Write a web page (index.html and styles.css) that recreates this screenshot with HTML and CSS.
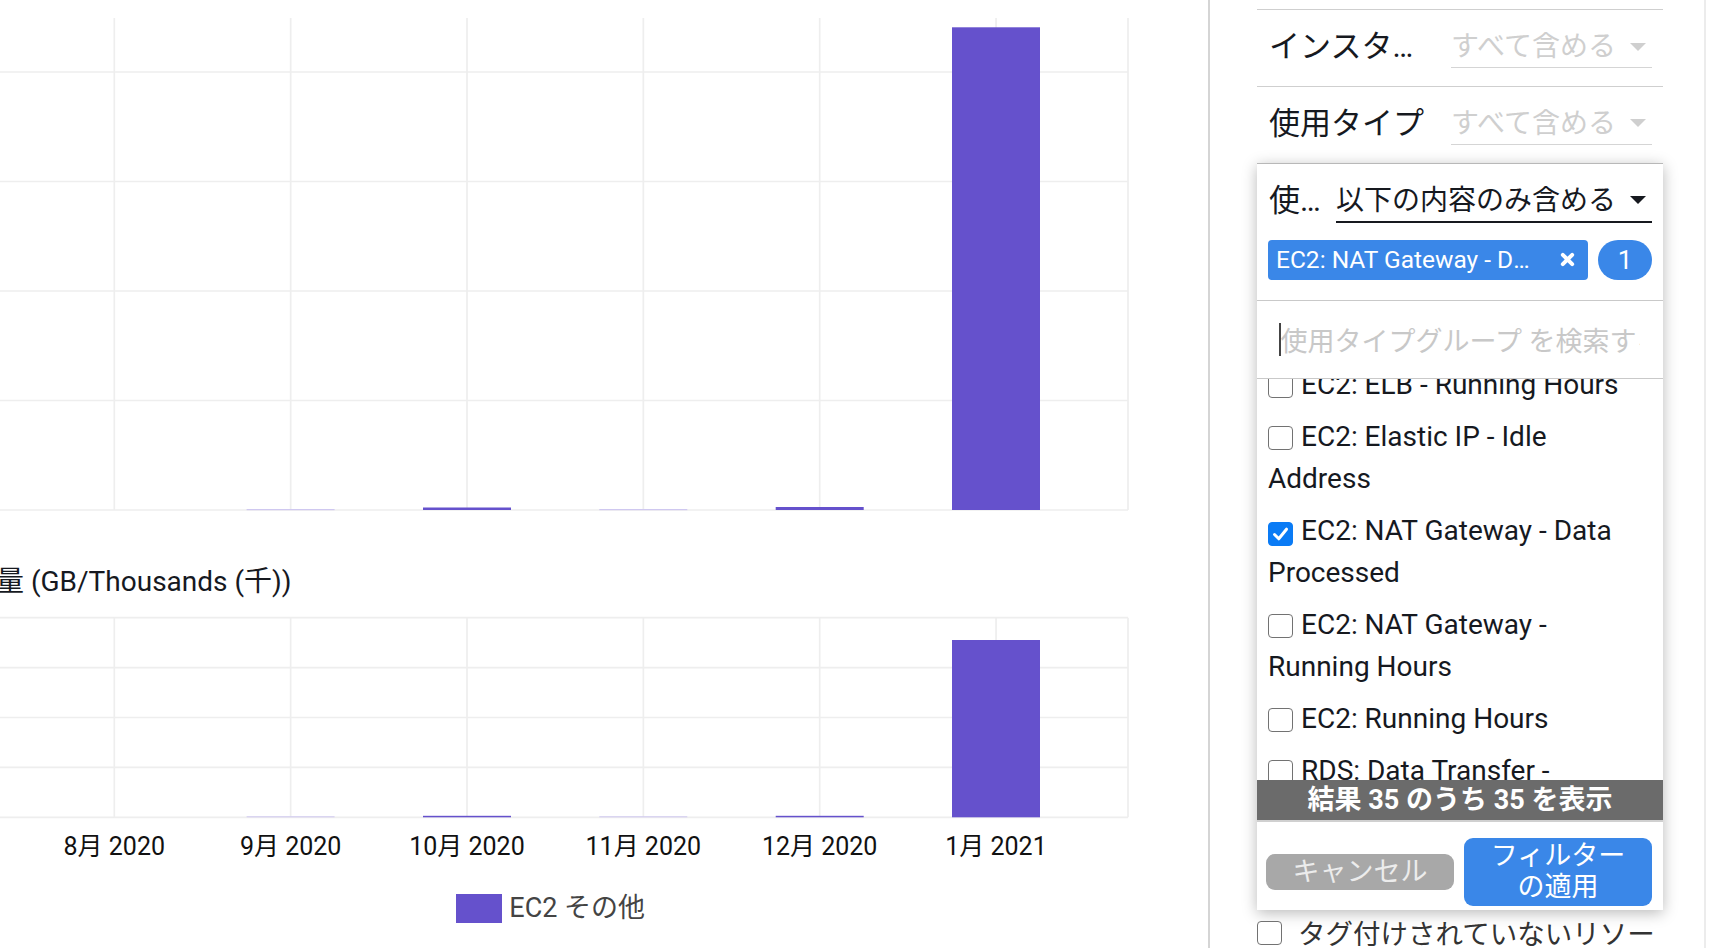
FILE: index.html
```html
<!DOCTYPE html>
<html lang="ja">
<head>
<meta charset="utf-8">
<title>Cost Explorer</title>
<link rel="stylesheet" href="styles.css">
</head>
<body>
<div class="page">
  <section class="charts">
    <svg class="chart" width="1208" height="520" viewBox="0 0 1208 520">
      <g class="grid">
        <line x1="0" y1="72" x2="1128" y2="72"/>
        <line x1="0" y1="181.5" x2="1128" y2="181.5"/>
        <line x1="0" y1="291" x2="1128" y2="291"/>
        <line x1="0" y1="400.5" x2="1128" y2="400.5"/>
        <line x1="0" y1="510" x2="1128" y2="510"/>
        <line x1="114.3" y1="18" x2="114.3" y2="510"/>
        <line x1="290.65" y1="18" x2="290.65" y2="510"/>
        <line x1="467" y1="18" x2="467" y2="510"/>
        <line x1="643.35" y1="18" x2="643.35" y2="510"/>
        <line x1="819.7" y1="18" x2="819.7" y2="510"/>
        <line x1="996.05" y1="18" x2="996.05" y2="510"/>
        <line x1="1128" y1="18" x2="1128" y2="510"/>
      </g>
      <g class="bars">
        <rect class="faint" x="246.6" y="509" width="88" height="1.2"/>
        <rect x="423" y="507.5" width="88" height="2.5"/>
        <rect class="faint" x="599.3" y="509" width="88" height="1.2"/>
        <rect x="775.7" y="507" width="88" height="3"/>
        <rect x="952" y="27.3" width="88" height="482.7"/>
      </g>
    </svg>
    <div class="chart-title">量 (GB/Thousands (千))</div>
    <svg class="chart" width="1208" height="220" viewBox="0 0 1208 220">
      <g class="grid">
        <line x1="0" y1="17.7" x2="1128" y2="17.7"/>
        <line x1="0" y1="67.6" x2="1128" y2="67.6"/>
        <line x1="0" y1="117.5" x2="1128" y2="117.5"/>
        <line x1="0" y1="167.4" x2="1128" y2="167.4"/>
        <line x1="0" y1="217.3" x2="1128" y2="217.3"/>
        <line x1="114.3" y1="17.7" x2="114.3" y2="217.3"/>
        <line x1="290.65" y1="17.7" x2="290.65" y2="217.3"/>
        <line x1="467" y1="17.7" x2="467" y2="217.3"/>
        <line x1="643.35" y1="17.7" x2="643.35" y2="217.3"/>
        <line x1="819.7" y1="17.7" x2="819.7" y2="217.3"/>
        <line x1="996.05" y1="17.7" x2="996.05" y2="217.3"/>
        <line x1="1128" y1="17.7" x2="1128" y2="217.3"/>
      </g>
      <g class="bars">
        <rect class="faint" x="246.6" y="216.3" width="88" height="1"/>
        <rect x="423" y="215.8" width="88" height="1.5"/>
        <rect class="faint" x="599.3" y="216.3" width="88" height="1"/>
        <rect x="775.7" y="215.8" width="88" height="1.5"/>
        <rect x="952" y="40" width="88" height="177.3"/>
      </g>
    </svg>
    <div class="x-labels">
      <span>8月 2020</span>
      <span>9月 2020</span>
      <span>10月 2020</span>
      <span>11月 2020</span>
      <span>12月 2020</span>
      <span>1月 2021</span>
    </div>
    <div class="legend">
      <span class="legend-swatch"></span>
      <span class="legend-text">EC2 その他</span>
    </div>
  </section>

  <aside class="filters">
    <div class="filter-row">
      <div class="filter-label">インスタンスタイプ</div>
      <div class="select">
        <span>すべて含める</span>
        <svg class="caret" width="16" height="8" viewBox="0 0 16 8"><polygon points="0,0 16,0 8,8"/></svg>
      </div>
    </div>
    <div class="filter-row">
      <div class="filter-label">使用タイプ</div>
      <div class="select">
        <span>すべて含める</span>
        <svg class="caret" width="16" height="8" viewBox="0 0 16 8"><polygon points="0,0 16,0 8,8"/></svg>
      </div>
    </div>

    <div class="dropdown">
      <div class="dropdown-head">
        <div class="filter-label">使用タイプグループ</div>
        <div class="select select-active">
          <span>以下の内容のみ含める</span>
          <svg class="caret" width="16" height="8" viewBox="0 0 16 8"><polygon points="0,0 16,0 8,8"/></svg>
        </div>
      </div>
      <div class="tokens">
        <span class="token">
          <span class="token-text">EC2: NAT Gateway - Data Processed</span>
          <svg class="token-x" width="15" height="15" viewBox="0 0 16 16"><path d="M3 3 L13 13 M13 3 L3 13"/></svg>
        </span>
        <span class="count">1</span>
      </div>
      <div class="search">
        <span class="text-caret"></span>
        <span class="placeholder">使用タイプグループ を検索する</span>
      </div>
      <div class="options">
        <ul class="option-list">
          <li><span class="cb"></span>EC2: ELB - Running Hours</li>
          <li><span class="cb"></span>EC2: Elastic IP - Idle Address</li>
          <li><span class="cb cb-on"><svg width="21" height="20" viewBox="0 0 21 20"><path d="M4.5 10.5 L8.8 14.8 L16.5 5.2"/></svg></span>EC2: NAT Gateway - Data Processed</li>
          <li><span class="cb"></span>EC2: NAT Gateway - Running Hours</li>
          <li><span class="cb"></span>EC2: Running Hours</li>
          <li><span class="cb"></span>RDS: Data Transfer - Internet Out</li>
        </ul>
      </div>
      <div class="result-bar">結果 35 のうち 35 を表示</div>
      <div class="actions">
        <button class="btn btn-cancel" type="button">キャンセル</button>
        <button class="btn btn-apply" type="button">フィルターの適用</button>
      </div>
    </div>

    <div class="check-row">
      <span class="cb"></span>
      <span class="check-text">タグ付けされていないリソース</span>
    </div>
  </aside>

  <div class="edge"></div>
</div>
</body>
</html>
```

FILE: styles.css
```css
* {
  box-sizing: border-box;
}

html,
body {
  margin: 0;
  padding: 0;
  height: 100%;
}

body {
  font-family: Roboto, "Noto Sans CJK JP", sans-serif;
  color: #16191f;
  background: #ffffff;
  overflow: hidden;
}

.page {
  display: flex;
  width: 1716px;
  height: 948px;
  overflow: hidden;
}

/* ---------- charts ---------- */

.charts {
  flex: none;
  width: 1208px;
  display: flex;
  flex-direction: column;
}

.chart {
  display: block;
  flex: none;
}

.grid line {
  stroke: #eeeeee;
  stroke-width: 1.7;
}

.bars rect {
  fill: #6551cc;
}

.bars rect.faint {
  fill: #cfc8f0;
}

.chart-title {
  margin: 44px 0 0 -4px;
  font-size: 28px;
  line-height: 36px;
  white-space: nowrap;
  color: #16191f;
}

.x-labels {
  display: grid;
  grid-template-columns: repeat(6, 176.35px);
  padding-left: 26.1px;
  margin-top: 12px;
  font-size: 25px;
  line-height: 30px;
  text-align: center;
  white-space: nowrap;
  color: #111111;
}

.legend {
  display: flex;
  align-items: center;
  gap: 7.6px;
  margin: 32px 0 0 456px;
}

.legend-swatch {
  width: 45.7px;
  height: 29px;
  background: #6551cc;
}

.legend-text {
  font-size: 27px;
  line-height: 29px;
  color: #444444;
}

/* ---------- filter panel ---------- */

.filters {
  flex: none;
  width: 496px;
  border-left: 2px solid #d5d5d5;
  padding: 9px 41px 0 47px;
}

.filter-row {
  display: flex;
  align-items: flex-start;
  gap: 22px;
  border-top: 1.5px solid #cfcfcf;
  padding: 16px 11px 17.8px 12px;
}

.filter-label {
  flex: 1 1 auto;
  min-width: 0;
  font-size: 31px;
  line-height: 41px;
  white-space: nowrap;
  overflow: hidden;
  text-overflow: ellipsis;
  color: #16191f;
}

.select {
  flex: none;
  display: flex;
  align-items: center;
  gap: 14px;
  padding-right: 6px;
  border-bottom: 1.5px solid #d5d5d5;
  font-size: 28px;
  line-height: 41px;
  white-space: nowrap;
  color: #cfcfcf;
}

.caret {
  display: block;
  fill: #cfcfcf;
}

.select-active {
  color: #16191f;
  border-bottom: 2px solid #16191f;
}

.select-active .caret {
  fill: #16191f;
}

/* ---------- dropdown ---------- */

.dropdown {
  background: #ffffff;
  border-top: 1.5px solid #b8b8b8;
  box-shadow: 0 3px 14px rgba(0, 0, 0, 0.28);
}

.dropdown-head {
  display: flex;
  align-items: flex-start;
  gap: 4px;
  padding: 16px 11px 0 12px;
}

.tokens {
  display: flex;
  align-items: center;
  gap: 10px;
  padding: 17px 11px 20px 11px;
}

.token {
  display: flex;
  align-items: center;
  width: 320px;
  height: 40px;
  padding: 0 13px 0 8px;
  background: #3a87e8;
  color: #ffffff;
  border-radius: 4px;
  font-size: 24.5px;
}

.token-text {
  flex: 1 1 auto;
  min-width: 0;
  white-space: nowrap;
  overflow: hidden;
  text-overflow: ellipsis;
}

.token-x {
  flex: none;
  margin-left: 20px;
}

.token-x path {
  stroke: #ffffff;
  stroke-width: 4.2;
  stroke-linecap: round;
  fill: none;
}

.count {
  display: flex;
  align-items: center;
  justify-content: center;
  width: 54px;
  height: 40px;
  border-radius: 20px;
  background: #3a87e8;
  color: #ffffff;
  font-size: 26px;
}

.search {
  display: flex;
  align-items: center;
  height: 79.5px;
  padding: 0 23px 0 22px;
  border-top: 1.5px solid #c9c9c9;
  border-bottom: 1.5px solid #c9c9c9;
  overflow: hidden;
}

.text-caret {
  flex: none;
  width: 1.5px;
  height: 33px;
  background: #444444;
}

.placeholder {
  flex: 1 1 auto;
  min-width: 0;
  overflow: hidden;
  white-space: nowrap;
  font-size: 27px;
  color: #c8c8c8;
}

.options {
  height: 400.5px;
  overflow: hidden;
  padding: 0 30px 0 11px;
}

.option-list {
  margin: -20.5px 0 0;
  padding: 0;
  list-style: none;
}

.option-list li {
  padding: 5px 0;
  font-size: 28px;
  line-height: 42px;
  color: #16191f;
}

.cb {
  display: inline-flex;
  align-items: center;
  justify-content: center;
  width: 25px;
  height: 24px;
  margin-right: 8px;
  border: 1.5px solid #727272;
  border-radius: 4px;
  vertical-align: -4px;
  background: #ffffff;
}

.cb-on {
  background: #0a7bf5;
  border-color: #0a7bf5;
}

.cb-on path {
  stroke: #ffffff;
  stroke-width: 3;
  stroke-linecap: round;
  stroke-linejoin: round;
  fill: none;
}

.result-bar {
  height: 42px;
  background: #6b6b6b;
  border-bottom: 2px solid #d0d0d0;
  color: #ffffff;
  font-size: 27px;
  font-weight: 700;
  line-height: 40px;
  text-align: center;
  white-space: nowrap;
}

.actions {
  display: flex;
  align-items: center;
  gap: 10px;
  padding: 16px 11px 4px 9px;
}

.btn {
  flex: none;
  width: 188px;
  border: 0;
  border-radius: 9px;
  font-family: inherit;
  font-size: 27px;
  color: #ffffff;
  cursor: pointer;
}

.btn-cancel {
  height: 36px;
  padding: 0;
  line-height: 36px;
  background: #a8a8a8;
  color: #ececec;
}

.btn-apply {
  height: 68px;
  padding: 3px 16px;
  line-height: 31px;
  background: #3a87e8;
}

/* ---------- underlying checkbox row ---------- */

.check-row {
  display: flex;
  align-items: flex-start;
  gap: 8px;
  margin-top: 10px;
}

.check-row .cb {
  flex: none;
  margin-top: 1px;
}

.check-text {
  font-size: 27.5px;
  line-height: 30px;
  color: #333333;
}

.edge {
  flex: none;
  width: 12px;
  border-left: 2px solid #ececec;
}
```
